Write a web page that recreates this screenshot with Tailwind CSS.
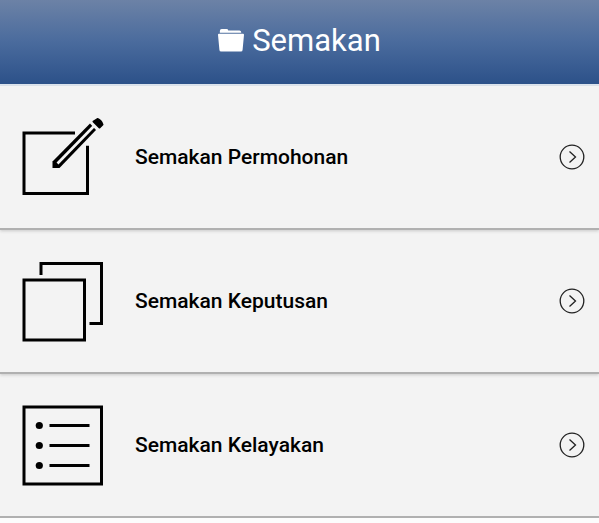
<!DOCTYPE html>
<html lang="ms">
  <head>
    <meta charset="UTF-8" />
    <meta name="viewport" content="width=device-width, initial-scale=1.0" />
    <title>Semakan</title>
    <script src="https://cdn.jsdelivr.net/npm/@tailwindcss/browser@4"></script>
  </head>

  <body class="bg-[#fcfcfc] text-black font-[Roboto,sans-serif]">
    <!-- Header -->
    <header class="bg-linear-to-b from-[#6c82a6] via-[#4a6b9d] to-[#2c5189] text-white">
      <div class="flex items-center justify-center gap-2 h-21 pb-0.5">
        <svg class="w-[26px] h-6" viewBox="0 0 28 25" preserveAspectRatio="none" fill="currentColor" aria-hidden="true">
          <path d="M2 4V2Q2 0 4 0h5q2 0 2 1.500h12q2 0 2 2V4z" />
          <path d="M1 5h26q1 0 1 1l-1.500 15.500q0 2-2 2h-21q-2 0-2-2L0 6q0-1 1-1z" />
        </svg>
        <h1 class="text-[31px] leading-10">Semakan</h1>
      </div>
    </header>

    <!-- Menu -->
    <nav class="border-t-2 border-[#dde5ef]">
      <a href="#permohonan" class="relative z-30 flex items-center h-36 pl-[22px] pr-[14px] bg-[#f3f3f3] border-b-2 border-[#b0b0b0] shadow-[0_1px_3px_#c8c8c8]">
        <svg class="size-[82px] shrink-0" viewBox="0 0 82 82" fill="none" stroke="currentColor" stroke-width="3" aria-hidden="true">
          <path d="M53 17H2v60.500h63.500V29.700" />
          <!-- pencil: body, groove, eraser -->
          <path d="M30.500 52v-6.500L68 7.500l6 6.500L37.500 52z" fill="currentColor" stroke="none" />
          <path d="M35.500 47.500 71.500 10.500" stroke="#f3f3f3" stroke-width="2.600" />
          <path d="M71.500 5.500 75.500 3Q79 4.500 80.500 8.500L77.500 11.500z" fill="currentColor" stroke-width="2" stroke-linejoin="round" />
        </svg>
        <span class="flex-1 ml-[31px] text-[21px] leading-7 font-medium">Semakan Permohonan</span>
        <svg class="size-[26px] shrink-0" viewBox="0 0 26 26" fill="none" stroke="#222" stroke-width="1.3" aria-hidden="true">
          <circle cx="13" cy="13" r="11.800" />
          <path d="M10.500 7.500 16.500 13l-6 5.500" />
        </svg>
      </a>

      <a href="#keputusan" class="relative z-20 flex items-center h-36 pl-[22px] pr-[14px] bg-[#f3f3f3] border-b-2 border-[#b0b0b0] shadow-[0_1px_3px_#c8c8c8]">
        <svg class="size-[82px] shrink-0" viewBox="0 0 82 82" fill="none" stroke="currentColor" stroke-width="3" aria-hidden="true">
          <path d="M2 20h60.500v60H2z" />
          <path d="M19 15V3.500h60.500v60h-12" />
        </svg>
        <span class="flex-1 ml-[31px] text-[21px] leading-7 font-medium">Semakan Keputusan</span>
        <svg class="size-[26px] shrink-0" viewBox="0 0 26 26" fill="none" stroke="#222" stroke-width="1.3" aria-hidden="true">
          <circle cx="13" cy="13" r="11.800" />
          <path d="M10.500 7.500 16.500 13l-6 5.500" />
        </svg>
      </a>

      <a href="#kelayakan" class="relative z-10 flex items-center h-36 pl-[22px] pr-[14px] bg-[#f3f3f3] border-b-2 border-[#b0b0b0] shadow-[0_1px_3px_#c8c8c8]">
        <svg class="size-[82px] shrink-0" viewBox="0 0 82 82" fill="none" stroke="currentColor" stroke-width="3" aria-hidden="true">
          <path d="M2 3h77.500v77H2z" />
          <path d="M27.500 21.500h40M27.500 41.500h40M27.500 61.500h40" />
          <g fill="currentColor" stroke="none">
            <circle cx="17.300" cy="21.500" r="3.600" />
            <circle cx="17.300" cy="41.500" r="3.600" />
            <circle cx="17.300" cy="61.500" r="3.600" />
          </g>
        </svg>
        <span class="flex-1 ml-[31px] text-[21px] leading-7 font-medium">Semakan Kelayakan</span>
        <svg class="size-[26px] shrink-0" viewBox="0 0 26 26" fill="none" stroke="#222" stroke-width="1.3" aria-hidden="true">
          <circle cx="13" cy="13" r="11.800" />
          <path d="M10.500 7.500 16.500 13l-6 5.500" />
        </svg>
      </a>
    </nav>
  </body>
</html>
